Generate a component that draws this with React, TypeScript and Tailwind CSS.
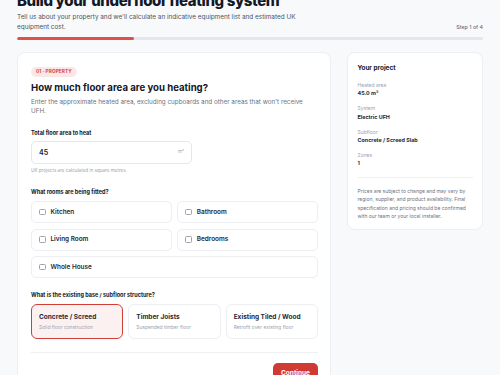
const rooms = ["Kitchen", "Bathroom", "Living Room", "Bedrooms"]

const subfloors = [
  { title: "Concrete / Screed", sub: "Solid floor construction", active: true },
  { title: "Timber Joists", sub: "Suspended timber floor", active: false },
  { title: "Existing Tiled / Wood", sub: "Retrofit over existing floor", active: false },
]

const summary = [
  { label: "Heated area", value: "45.0 m²" },
  { label: "System", value: "Electric UFH" },
  { label: "Subfloor", value: "Concrete / Screed Slab" },
  { label: "Zones", value: "1" },
]

function Checkbox() {
  return <span className="w-[6.5px] h-[6.5px] rounded-[1.5px] border border-[#9ca3af] bg-white shrink-0" />
}

function App() {
  return (
    <div className="w-[500px] h-[375px] overflow-hidden bg-[#f8f9fb] text-[#111827] font-['Inter',sans-serif] leading-none">
      <div className="px-[17px] -mt-[8px]">

        {/* Header */}
        <h1 className="text-[15px] leading-[18px] font-extrabold tracking-tight text-[#111827]">
          Build your underfloor heating system
        </h1>

        <div className="mt-[2px] flex items-end justify-between">
          <p className="text-[6.4px] leading-[10px] text-[#4b5563] w-[292px]">
            Tell us about your property and we'll calculate an indicative equipment list and estimated UK equipment cost.
          </p>
          <span className="text-[5.3px] leading-[10px] font-medium text-[#6b7280]">Step 1 of 4</span>
        </div>

        <div className="mt-[5px] h-[3px] rounded-full bg-[#e5e7eb] overflow-hidden">
          <div className="h-full w-[117px] bg-[#e0504a] rounded-full" />
        </div>

        {/* Body */}
        <div className="mt-[12px] flex gap-[16px] items-start">

          {/* Form card */}
          <div className="w-[314px] shrink-0 bg-white border border-[#eceef2] rounded-[8px] pl-[13px] pr-[12px] pt-[14px] pb-[20px]">

            <span className="flex w-fit items-center h-[9.5px] px-[5px] rounded-full bg-[#fce7e7] text-[#d2413a] text-[4.7px] font-bold tracking-wide">
              01 · PROPERTY
            </span>

            <h2 className="mt-[5.5px] text-[9.6px] leading-[12px] font-bold">
              How much floor area are you heating?
            </h2>

            <p className="mt-[4px] text-[6.3px] leading-[9px] text-[#6b7280]">
              Enter the approximate heated area, excluding cupboards and other areas that won't receive UFH.
            </p>

            <p className="mt-[13px] text-[5.5px] leading-[8px] font-bold">Total floor area to heat</p>

            <div className="mt-[3.5px] w-[161px] h-[23px] rounded-[5px] border border-[#e5e7eb] flex items-center justify-between px-[7px]">
              <span className="text-[7px] font-semibold">45</span>
              <span className="text-[4.5px] text-[#9ca3af]">m²</span>
            </div>

            <p className="mt-[3px] text-[4.6px] leading-[7px] text-[#9ca3af]">
              UK projects are calculated in square metres.
            </p>

            <p className="mt-[14px] text-[5.5px] leading-[8px] font-bold">What rooms are being fitted?</p>

            <div className="mt-[5.5px] grid grid-cols-2 gap-[5.5px]">
              {rooms.map((room) => {
                return (
                  <div
                    key={room}
                    className="h-[22px] rounded-[5px] border border-[#eceef2] flex items-center gap-[5px] px-[7px]"
                  >
                    <Checkbox />
                    <span className="text-[6.4px] font-semibold text-[#1f2937]">{room}</span>
                  </div>
                )
              })}
              <div className="col-span-2 h-[22px] rounded-[5px] border border-[#eceef2] flex items-center gap-[5px] px-[7px]">
                <Checkbox />
                <span className="text-[6.4px] font-semibold text-[#1f2937]">Whole House</span>
              </div>
            </div>

            <p className="mt-[13px] text-[5.5px] leading-[8px] font-bold">
              What is the existing base / subfloor structure?
            </p>

            <div className="mt-[5px] grid grid-cols-3 gap-[5px]">
              {subfloors.map((item) => {
                return (
                  <div
                    key={item.title}
                    className={
                      item.active
                        ? "h-[35px] rounded-[6px] border-[1.5px] border-[#cf3f38] bg-[#fcf1f1] px-[7px] pt-[8px]"
                        : "h-[35px] rounded-[6px] border border-[#eceef2] bg-white px-[7px] pt-[8px]"
                    }
                  >
                    <p className="text-[6.5px] leading-[9px] font-bold text-[#1f2937]">{item.title}</p>
                    <p className="mt-[2px] text-[4.9px] leading-[7px] text-[#9ca3af]">{item.sub}</p>
                  </div>
                )
              })}
            </div>

            <div className="mt-[13px] h-px bg-[#eef0f3]" />

            <div className="mt-[10px] flex justify-end">
              <button className="h-[20px] px-[8px] rounded-[5px] bg-[#d13a32] text-white text-[6.5px] font-bold">
                Continue
              </button>
            </div>
          </div>

          {/* Summary card */}
          <div className="flex-1 bg-white border border-[#eceef2] rounded-[8px] px-[9.5px] pt-[10.5px] pb-[9px]">
            <h3 className="text-[6.4px] leading-[9px] font-bold">Your project</h3>

            <div className="mt-[9.5px] flex flex-col gap-[8px]">
              {summary.map((row) => {
                return (
                  <div key={row.label}>
                    <p className="text-[5px] leading-[7px] text-[#9ca3af]">{row.label}</p>
                    <p className="mt-[1.3px] text-[5.4px] leading-[7px] font-bold text-[#1f2937]">{row.value}</p>
                  </div>
                )
              })}
            </div>

            <div className="mt-[10px] h-px bg-[#eef0f3]" />

            <p className="mt-[9px] text-[5px] leading-[8.3px] text-[#6b7280]">
              Prices are subject to change and may vary by region, supplier, and product availability. Final specification and pricing should be confirmed with our team or your local installer.
            </p>
          </div>

        </div>
      </div>
    </div>
  )
}

export default App
